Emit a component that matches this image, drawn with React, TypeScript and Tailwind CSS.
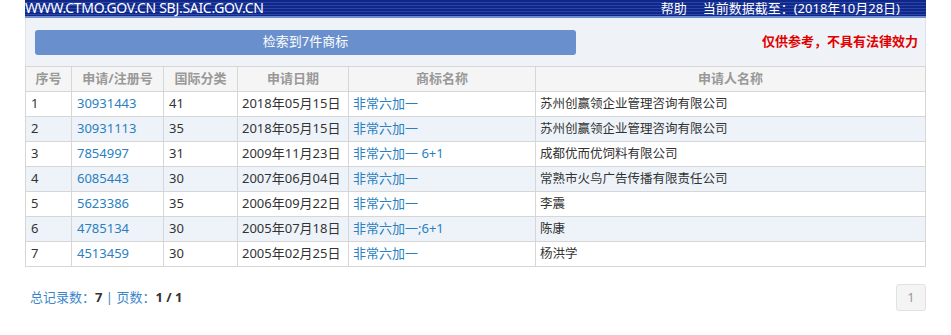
const rows = [
  ["1", "30931443", "41", "2018年05月15日", "非常六加一", "苏州创赢领企业管理咨询有限公司"],
  ["2", "30931113", "35", "2018年05月15日", "非常六加一", "苏州创赢领企业管理咨询有限公司"],
  ["3", "7854997", "31", "2009年11月23日", "非常六加一 6+1", "成都优而优饲料有限公司"],
  ["4", "6085443", "30", "2007年06月04日", "非常六加一", "常熟市火鸟广告传播有限责任公司"],
  ["5", "5623386", "35", "2006年09月22日", "非常六加一", "李震"],
  ["6", "4785134", "30", "2005年07月18日", "非常六加一;6+1", "陈康"],
  ["7", "4513459", "30", "2005年02月25日", "非常六加一", "杨洪学"],
];

const cols = ["w-[46px]", "w-[92px]", "w-[74px]", "w-[111px]", "w-[187px]", ""];

export default function App() {
  return (
    <div className="w-[951px] h-[335px] bg-white text-[13px] text-[#333] font-['Noto_Sans','Noto_Sans_CJK_SC',sans-serif]">
      <div className="ml-[25px] w-[901px]">
        {/* top bar */}
        <div className="h-[18px] flex items-center justify-between text-white text-[14px] leading-[16px] bg-[repeating-linear-gradient(to_bottom,#10278a_0px,#10278a_2px,#2a45a6_2px,#2a45a6_3px)] border-b-2 border-[#6f8ed0]">
          <span className="tracking-[-0.3px] whitespace-nowrap">WWW.CTMO.GOV.CN SBJ.SAIC.GOV.CN</span>
          <span className="pr-[26px] text-[13px] whitespace-nowrap">
            <span className="mr-[16px]">帮助</span>当前数据截至：(2018年10月28日)
          </span>
        </div>

        {/* search result header */}
        <div className="h-[48px] bg-[#eff3f8] border-x border-[#dfe3e8] flex items-center justify-between pl-[9px] pr-[7px]">
          <div className="w-[541px] h-[25px] rounded-[3px] bg-[#6a8fcd] text-white flex items-center justify-center">
            检索到7件商标
          </div>
          <span className="text-[#e00000] text-[13px] font-bold">仅供参考，不具有法律效力</span>
        </div>

        {/* table */}
        <table className="w-full border-collapse table-fixed">
          <thead>
            <tr className="h-[25px] bg-[#f5f5f5] text-[#999]">
              {["序号", "申请/注册号", "国际分类", "申请日期", "商标名称", "申请人名称"].map((h, i) => (
                <th key={h} className={`${cols[i]} border border-[#d6d6d6] font-bold text-center p-0`}>{h}</th>
              ))}
            </tr>
          </thead>
          <tbody>
            {rows.map((r, i) => (
              <tr key={r[0]} className={`h-[25px] ${i % 2 === 1 ? "bg-[#eef3f9]" : "bg-white"}`}>
                <td className="border border-[#d6d6d6] px-[5px]">{r[0]}</td>
                <td className="border border-[#d6d6d6] px-[5px] text-[#2a7fc0]">{r[1]}</td>
                <td className="border border-[#d6d6d6] px-[5px]">{r[2]}</td>
                <td className="border border-[#d6d6d6] px-[4px]">{r[3]}</td>
                <td className="border border-[#d6d6d6] px-[4px] text-[#2a7fc0]">{r[4]}</td>
                <td className="border border-[#d6d6d6] px-[4px] text-[12.5px]">{r[5]}</td>
              </tr>
            ))}
          </tbody>
        </table>

        {/* footer */}
        <div className="flex items-center justify-between mt-[17px]">
          <span className="pl-[5px] text-[#3a86cc]">
            总记录数：<b className="text-[#333]">7</b> | 页数：<b className="text-[#333]">1 / 1</b>
          </span>
          <span className="w-[30px] h-[27px] flex items-center justify-center rounded-[3px] border border-[#e2e2e2] bg-[#f4f4f4] text-[#999]">
            1
          </span>
        </div>
      </div>
    </div>
  );
}
